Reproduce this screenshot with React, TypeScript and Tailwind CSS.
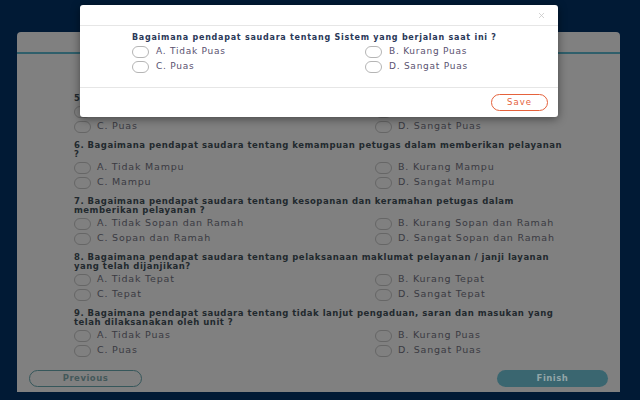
import { X } from "lucide-react";

type Question = {
  lines: string[];
  options: string[];
};

const questions: Question[] = [
  {
    lines: ["5. Bagaimana pendapat saudara tentang kualitas sarana dan prasarana ?"],
    options: ["A. Tidak Puas", "B. Kurang Puas", "C. Puas", "D. Sangat Puas"],
  },
  {
    lines: ["6. Bagaimana pendapat saudara tentang kemampuan petugas dalam memberikan pelayanan", "?"],
    options: ["A. Tidak Mampu", "B. Kurang Mampu", "C. Mampu", "D. Sangat Mampu"],
  },
  {
    lines: ["7. Bagaimana pendapat saudara tentang kesopanan dan keramahan petugas dalam", "memberikan pelayanan ?"],
    options: [
      "A. Tidak Sopan dan Ramah",
      "B. Kurang Sopan dan Ramah",
      "C. Sopan dan Ramah",
      "D. Sangat Sopan dan Ramah",
    ],
  },
  {
    lines: ["8. Bagaimana pendapat saudara tentang pelaksanaan maklumat pelayanan / janji layanan", "yang telah dijanjikan?"],
    options: ["A. Tidak Tepat", "B. Kurang Tepat", "C. Tepat", "D. Sangat Tepat"],
  },
  {
    lines: ["9. Bagaimana pendapat saudara tentang tidak lanjut pengaduan, saran dan masukan yang", "telah dilaksanakan oleh unit ?"],
    options: ["A. Tidak Puas", "B. Kurang Puas", "C. Puas", "D. Sangat Puas"],
  },
];

function Radio({ label, dim }: { label: string; dim?: boolean }) {
  return (
    <label className="flex h-[15px] items-center">
      <span
        className={`h-[12px] w-[17px] shrink-0 rounded-full border ${
          dim ? "border-[#666]" : "border-[#b5b5b5]"
        }`}
      />
      <span
        className={
          dim
            ? "ml-[6px] whitespace-nowrap text-[9.5px] tracking-[0.8px] text-[#3a3a42]"
            : "ml-[7px] whitespace-nowrap text-[9px] tracking-[0.75px] text-[#5a5270]"
        }
      >
        {label}
      </span>
    </label>
  );
}

export default function App() {
  return (
    <div
      className="relative h-[400px] w-[640px] overflow-hidden bg-[#011a35] pl-[17px] pr-[20px] pt-[32px]"
      style={{ fontFamily: '"DejaVu Sans", "Noto Sans", sans-serif' }}
    >
      {/* Survey card (dimmed behind the dialog) */}
      <div className="flex h-[360px] flex-col rounded-t-[4px] bg-[#808080]">
        <div className="h-[22px] border-b-2 border-[#2f5f6b]" />

        <div className="flex-1 pl-[57px] pt-[40px]">
          {questions.map((q, i) => (
            <div key={i} className="mb-[7px]">
              {q.lines.map((line, j) => (
                <div
                  key={j}
                  className="h-[9px] whitespace-nowrap text-[8.5px] font-bold leading-[9px] tracking-[0.5px] text-[#22292e]"
                >
                  {line}
                </div>
              ))}
              <div className="mt-[1px] grid grid-cols-[301px_1fr]">
                {q.options.map((o) => (
                  <Radio key={o} label={o} dim />
                ))}
              </div>
            </div>
          ))}
        </div>

        <div className="flex items-center justify-between px-[12px] pb-[5px]">
          <button className="h-[17px] w-[113px] rounded-full border border-[#36575b] text-[8.5px] font-bold tracking-[0.5px] text-[#44585a]">
            Previous
          </button>
          <button className="h-[17px] w-[111px] rounded-full bg-[#3a6670] text-[8.5px] font-bold tracking-[0.5px] text-[#92a5a8]">
            Finish
          </button>
        </div>
      </div>

      {/* Dialog */}
      <div className="absolute left-[80px] top-[5px] w-[478px] rounded-[3px] bg-white shadow-[0_2px_10px_rgba(0,0,0,0.45)]">
        <div className="flex h-[21px] items-center justify-end border-b border-[#e6e6e6] pr-[12px]">
          <X className="h-[9px] w-[9px] text-[#c4c4c4]" strokeWidth={2} />
        </div>
        <div className="pb-[13px] pl-[52px] pt-[7px]">
          <div className="h-[9px] whitespace-nowrap text-[8px] font-bold leading-[9px] tracking-[0.75px] text-[#2a3858]">
            Bagaimana pendapat saudara tentang Sistem yang berjalan saat ini ?
          </div>
          <div className="mt-[2px] grid grid-cols-[233px_1fr]">
            <Radio label="A. Tidak Puas" />
            <Radio label="B. Kurang Puas" />
            <Radio label="C. Puas" />
            <Radio label="D. Sangat Puas" />
          </div>
        </div>
        <div className="flex h-[30px] items-center justify-end border-t border-[#e6e6e6] pr-[10px]">
          <button className="h-[17px] w-[57px] rounded-full border border-[#e5623c] text-[8.5px] tracking-[1px] text-[#e5623c]">
            Save
          </button>
        </div>
      </div>
    </div>
  );
}
